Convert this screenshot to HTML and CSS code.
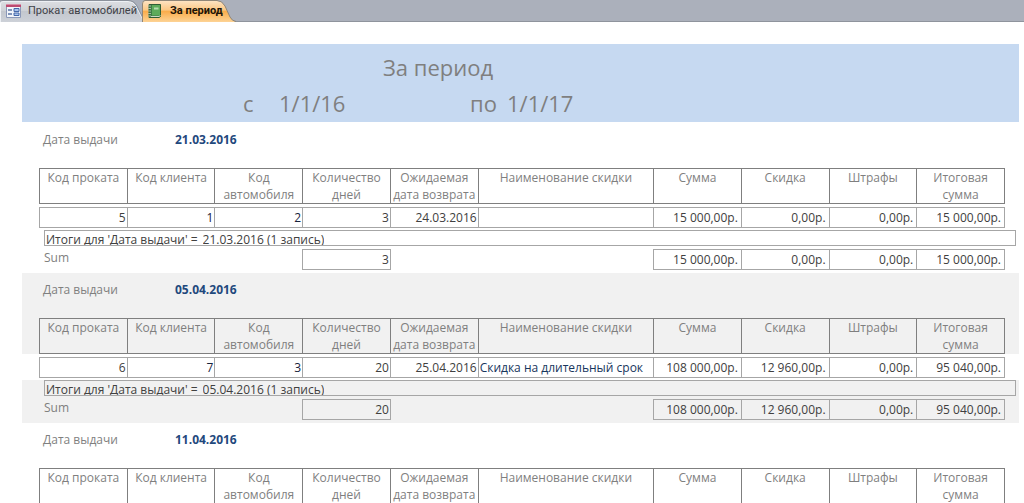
FILE: index.html
```html
<!DOCTYPE html>
<html lang="ru">
<head>
<meta charset="utf-8">
<title>За период</title>
<link rel="stylesheet" href="styles.css">
</head>
<body>
<nav class="tabs">
  <button class="tab tab-form" type="button">
    <svg class="tab-shape" viewBox="0 0 144 22" preserveAspectRatio="none" aria-hidden="true">
      <defs><linearGradient id="grey" x1="0" y1="0" x2="0" y2="1"><stop offset="0" stop-color="#dcdee2"/><stop offset=".45" stop-color="#cfd2d7"/><stop offset=".5" stop-color="#c3c7ce"/><stop offset="1" stop-color="#cdd1d8"/></linearGradient></defs>
      <path d="M0 22V4Q0 1 3 1H128Q133 1 136 6L144 22Z" fill="url(#grey)"/>
      <path d="M.5 22V4Q.5 1.500 3 1.500H128Q133 1.500 136 6L144 22" fill="none" stroke="#edf0f4"/>
      <path d="M0 1Q1 .5 3 .5H128Q134 .5 137 6L144 20" fill="none" stroke="#8b919b"/>
    </svg>
    <svg class="icon" viewBox="0 0 16 16" aria-hidden="true">
      <path d="M.5 1.500H14.500V14.500H.5Z" fill="#f1f4fa" stroke="#8a98b8"/>
      <path d="M0 1H15V4H0Z" fill="#bd4a70"/><path d="M0 1H15V2H0Z" fill="#d890a8"/>
      <path d="M2 7H6M2 11H6" stroke="#5873a5" stroke-width="1.500"/>
      <path d="M8 5.500H13V8.500H8ZM8 10H13V12.500H8Z" fill="#a9c3ec" stroke="#4467a8"/>
    </svg>
    <span>Прокат автомобилей</span>
  </button>
  <button class="tab tab-report" type="button">
    <svg class="tab-shape" viewBox="0 0 94 22" preserveAspectRatio="none" aria-hidden="true">
      <defs><linearGradient id="orange" x1="0" y1="0" x2="0" y2="1"><stop offset="0" stop-color="#fde3c2"/><stop offset=".42" stop-color="#fbc886"/><stop offset=".5" stop-color="#faad4c"/><stop offset="1" stop-color="#fdd395"/></linearGradient></defs>
      <path d="M0 22V4Q0 1 3 1H75Q80 1 83 6L88 17Q90 21 94 22Z" fill="url(#orange)"/>
      <path d="M.5 22V4Q.5 .5 3 .5H75Q80 .5 83 6L88 17Q90 21 94 21.500" fill="none" stroke="#8f8678"/>
    </svg>
    <svg class="icon" viewBox="0 0 16 16" aria-hidden="true">
      <path d="M1 1.500H12.500V13.500L11 14.500H1Z" fill="#3f7d45" stroke="#2f5e35"/>
      <path d="M4 2H12V12.500H4Z" fill="#5eab5a"/>
      <path d="M6 4.500H10.500V6.500H6Z" fill="#b5dcae"/>
      <path d="M3 13.500H11L12.500 12.500" fill="none" stroke="#c9d9c2"/>
      <path d="M0 3H3M0 5.500H3M0 8H3M0 10.500H3M0 13H3" stroke="#a9b9a4"/>
    </svg>
    <span>За период</span>
  </button>
</nav>
<main class="report">
  <header class="report-head">
    <h1>За период</h1>
    <p class="range"><span>с</span><span>1/1/16</span><span>по</span><span>1/1/17</span></p>
  </header>

  <section class="group">
    <div class="group-head"><span>Дата выдачи</span><strong>21.03.2016</strong></div>
    <table>
      <thead><tr><th>Код проката</th><th>Код клиента</th><th>Код автомобиля</th><th>Количество дней</th><th>Ожидаемая дата возврата</th><th>Наименование скидки</th><th>Сумма</th><th>Скидка</th><th>Штрафы</th><th>Итоговая сумма</th></tr></thead>
      <tbody><tr><td>5</td><td class="key">1</td><td class="key">2</td><td>3</td><td>24.03.2016</td><td class="name"></td><td class="money">15 000,00р.</td><td class="money">0,00р.</td><td class="money">0,00р.</td><td class="money">15 000,00р.</td></tr></tbody>
      <tfoot>
        <tr class="note"><td colspan="10"><span>Итоги для 'Дата выдачи' =</span><span>21.03.2016 (1 запись)</span></td></tr>
        <tr class="sum"><th colspan="3">Sum</th><td>3</td><td class="blank" colspan="2"></td><td class="money">15 000,00р.</td><td class="money">0,00р.</td><td class="money">0,00р.</td><td class="money">15 000,00р.</td></tr>
      </tfoot>
    </table>
  </section>

  <section class="group shaded">
    <div class="group-head"><span>Дата выдачи</span><strong>05.04.2016</strong></div>
    <table>
      <thead><tr><th>Код проката</th><th>Код клиента</th><th>Код автомобиля</th><th>Количество дней</th><th>Ожидаемая дата возврата</th><th>Наименование скидки</th><th>Сумма</th><th>Скидка</th><th>Штрафы</th><th>Итоговая сумма</th></tr></thead>
      <tbody><tr><td>6</td><td class="key">7</td><td class="key">3</td><td>20</td><td>25.04.2016</td><td class="name">Скидка на длительный срок</td><td class="money">108 000,00р.</td><td class="money">12 960,00р.</td><td class="money">0,00р.</td><td class="money">95 040,00р.</td></tr></tbody>
      <tfoot>
        <tr class="note"><td colspan="10"><span>Итоги для 'Дата выдачи' =</span><span>05.04.2016 (1 запись)</span></td></tr>
        <tr class="sum"><th colspan="3">Sum</th><td>20</td><td class="blank" colspan="2"></td><td class="money">108 000,00р.</td><td class="money">12 960,00р.</td><td class="money">0,00р.</td><td class="money">95 040,00р.</td></tr>
      </tfoot>
    </table>
  </section>

  <section class="group">
    <div class="group-head"><span>Дата выдачи</span><strong>11.04.2016</strong></div>
    <table>
      <thead><tr><th>Код проката</th><th>Код клиента</th><th>Код автомобиля</th><th>Количество дней</th><th>Ожидаемая дата возврата</th><th>Наименование скидки</th><th>Сумма</th><th>Скидка</th><th>Штрафы</th><th>Итоговая сумма</th></tr></thead>
    </table>
  </section>
</main>
</body>
</html>
```
FILE: styles.css
```css
* { box-sizing: border-box; }

body {
  margin: 0;
  height: 100vh;
  overflow: hidden;
  background: #fff;
  color: #404040;
  font: 12px/17px "Open Sans", "Noto Sans", sans-serif;
}

.tabs {
  display: flex;
  height: 22px;
  background: #abb0bb;
  border-bottom: 1px solid #8f949d;
}

.tab {
  position: relative;
  display: flex;
  align-items: center;
  gap: 6px;
  height: 22px;
  padding: 0 10px 0 6px;
  border: 0;
  background: none;
  color: #3f4248;
  font: 11px/16px Roboto, "Noto Sans", sans-serif;
  white-space: nowrap;
}

.tab-form { width: 144px; margin-right: -2px; }
.tab-report { width: 94px; color: #1c1408; font-weight: 700; }

.tab-shape {
  position: absolute;
  inset: 0;
  width: 100%;
  height: 100%;
}

.tab .icon { position: relative; flex: none; width: 16px; height: 16px; }
.tab span { position: relative; }

.report { margin: 22px 5px 0 22px; }

.report-head {
  padding: 8px 0 4px;
  background: #c6d9f1;
  color: #7f7f7f;
  font-size: 22px;
  line-height: 30px;
}

.report-head h1 {
  margin: 0 0 6px;
  padding-left: 361px;
  font: inherit;
}

.range {
  display: grid;
  grid-template-columns: 36px 191px 37px 1fr;
  margin: 0;
  padding-left: 221px;
}

.group-head {
  display: grid;
  grid-template-columns: 132px 1fr;
  padding: 8px 0 20px 21px;
  color: #7f7f7f;
}

.report-head + .group { padding-top: 1px; }

.group-head strong { color: #1f497d; }

table, thead, tbody, tfoot { display: block; }

tr {
  display: grid;
  grid-template-columns: repeat(5, 1fr) 2fr repeat(4, 1fr);
  padding: 0 15px 0 17px;
}

th, td {
  min-width: 0;
  margin-right: -1px;
  padding: 0;
  border: 1px solid #a6a6a6;
  line-height: 19px;
  text-align: right;
  white-space: nowrap;
}

th { color: #7f7f7f; font-weight: 400; }

thead th {
  border-color: #7f7f7f;
  line-height: 17px;
  text-align: center;
  white-space: normal;
}

tbody { padding: 3px 0 2px; }

td { padding-right: 1px; }
.key { color: #17233c; }
.name { padding-left: 1px; color: #17365d; text-align: left; }
.money { padding-right: 3px; }

.note { display: block; padding: 0 3px 3px 22px; }

.note td {
  display: flex;
  gap: 5px;
  margin: 0;
  padding: 0 0 0 1px;
  line-height: 14px;
}

.note span { height: 14px; line-height: 17px; overflow: hidden; }

.sum { padding-bottom: 3px; }

.sum th {
  grid-column: span 3;
  padding-left: 4px;
  border-color: transparent;
  line-height: 16px;
  text-align: left;
}

.sum .blank { grid-column: span 2; border-color: transparent; }
.sum td:nth-child(2) { z-index: 1; }

.shaded .group-head, .shaded thead, .shaded tfoot { background: #f1f1f1; }
```
